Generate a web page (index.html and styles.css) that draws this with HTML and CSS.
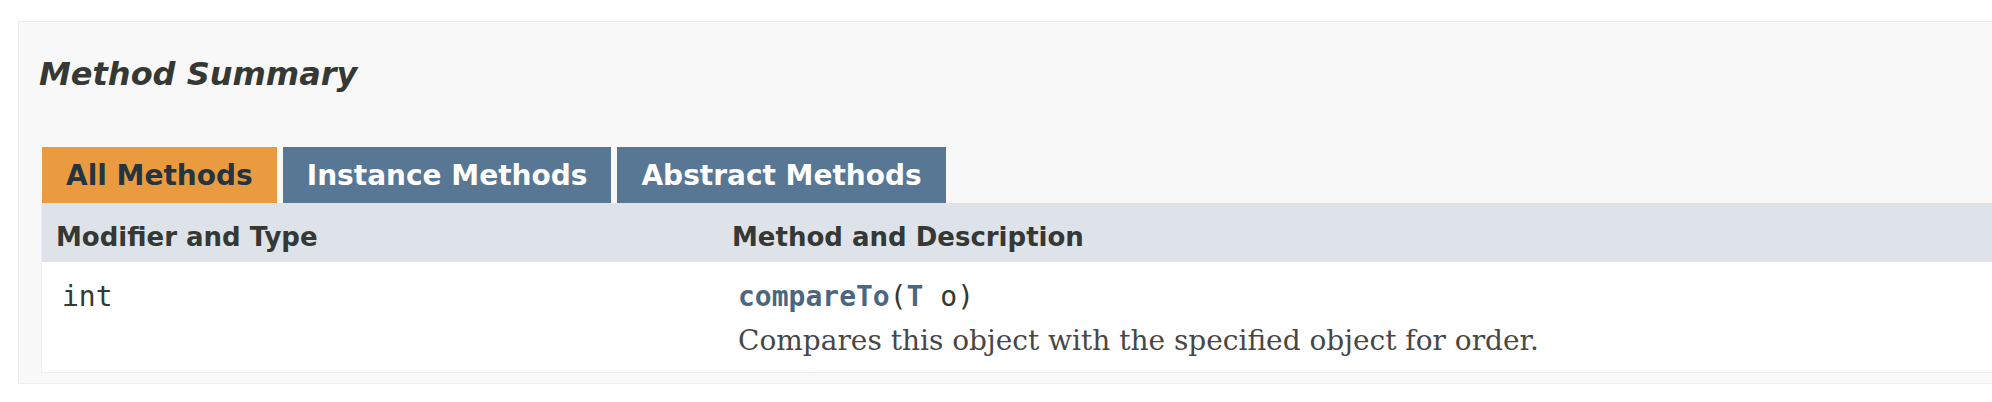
FILE: index.html
```html
<!DOCTYPE html>
<html>
<head>
<meta charset="utf-8">
<link rel="stylesheet" href="styles.css">
</head>
<body>
<div class="block-list">
  <h3 class="summary-title">Method Summary</h3>
  <div class="summary">
    <div class="tabs">
      <span class="tab active">All Methods</span>
      <span class="tab">Instance Methods</span>
      <span class="tab">Abstract Methods</span>
    </div>
    <div class="table">
      <div class="th col-first">Modifier and Type</div>
      <div class="th col-last">Method and Description</div>
      <div class="td col-first"><code class="code">int</code></div>
      <div class="td col-last">
        <code class="code"><a class="link">compareTo</a>(<a class="link">T</a>&nbsp;o)</code>
        <div class="desc">Compares this object with the specified object for order.</div>
      </div>
    </div>
  </div>
</div>
</body>
</html>
```
FILE: styles.css
```css
html, body {
  margin: 0;
  padding: 0;
  background: #ffffff;
  overflow: hidden;
}
body {
  width: 1992px;
  height: 402px;
  font-family: "DejaVu Sans", Arial, sans-serif;
  color: #353833;
}
.block-list {
  margin: 21px 0 0 18px;
  width: 2300px;
  border: 1px solid #ededed;
  background: #f8f8f8;
  padding: 0 0 10px 22px;
}
.summary-title {
  margin: 33px 0 0 -2px;
  font-size: 32px;
  line-height: 38px;
  font-weight: bold;
  font-style: italic;
  color: #353833;
}
.summary {
  margin-top: 54px;
}
.tabs {
  display: flex;
  gap: 6px;
  padding-left: 1px;
}
.tab {
  height: 54px;
  padding: 2px 24px 0 24px;
  line-height: 54px;
  font-size: 28px;
  font-weight: bold;
  color: #ffffff;
  background: #587794;
  white-space: nowrap;
}
.tab.active {
  background: #ea9b3f;
  color: #253441;
}
.table {
  display: grid;
  grid-template-columns: 676px 1fr;
  border: 1px solid #eeeeee;
  border-top: none;
  background: #ffffff;
}
.th {
  background: #dee3e9;
  padding: 16px 6px 7px 14px;
  font-size: 26px;
  line-height: 36px;
  font-weight: bold;
  white-space: nowrap;
}
.td {
  padding: 16px 6px 6px 20px;
}
.code {
  font-family: "DejaVu Sans Mono", "Liberation Mono", monospace;
  font-size: 28px;
  line-height: 38px;
  color: #353833;
  display: block;
}
.link {
  color: #4a6782;
  font-weight: bold;
  text-decoration: none;
}
.desc {
  margin: 5px 0 5px 0;
  font-family: "DejaVu Serif", Georgia, "Times New Roman", serif;
  font-size: 28px;
  line-height: 40px;
  color: #474747;
  white-space: nowrap;
}
```
